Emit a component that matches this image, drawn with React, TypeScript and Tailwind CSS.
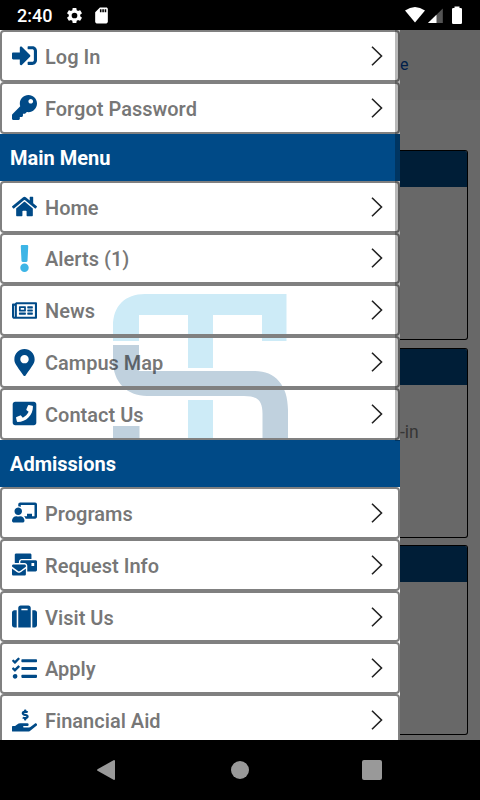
import type { IconType } from 'react-icons'
import {
  FaChalkboardTeacher,
  FaExclamation,
  FaHandHoldingUsd,
  FaHome,
  FaKey,
  FaMailBulk,
  FaMapMarkerAlt,
  FaPhoneSquare,
  FaRegNewspaper,
  FaSignInAlt,
  FaSuitcase,
  FaTasks,
} from 'react-icons/fa'

type Item = { label: string; icon: IconType; color?: string }
type Section = { title?: string; items: Item[] }

const sections: Section[] = [
  {
    items: [
      { label: 'Log In', icon: FaSignInAlt },
      { label: 'Forgot Password', icon: FaKey },
    ],
  },
  {
    title: 'Main Menu',
    items: [
      { label: 'Home', icon: FaHome },
      { label: 'Alerts (1)', icon: FaExclamation, color: 'text-[#3db5e6]' },
      { label: 'News', icon: FaRegNewspaper },
      { label: 'Campus Map', icon: FaMapMarkerAlt },
      { label: 'Contact Us', icon: FaPhoneSquare },
    ],
  },
  {
    title: 'Admissions',
    items: [
      { label: 'Programs', icon: FaChalkboardTeacher },
      { label: 'Request Info', icon: FaMailBulk },
      { label: 'Visit Us', icon: FaSuitcase },
      { label: 'Apply', icon: FaTasks },
      { label: 'Financial Aid', icon: FaHandHoldingUsd },
    ],
  },
]

function StatusBar() {
  return (
    <header className="flex h-[30px] shrink-0 items-center justify-between bg-black pr-[17px] pl-[17px] text-white">
      <div className="flex items-center">
        <span className="w-[48px] pt-px text-[18px] leading-none font-medium">2:40</span>
        <svg className="size-[19px]" viewBox="0 0 24 24" fill="currentColor">
          <path d="M19.14 12.94c.04-.3.06-.61.06-.94 0-.32-.02-.64-.07-.94l2.03-1.58a.49.49 0 0 0 .12-.61l-1.92-3.32a.49.49 0 0 0-.59-.22l-2.39.96c-.5-.38-1.03-.7-1.62-.94l-.36-2.54A.48.48 0 0 0 13.92 2.4h-3.84c-.24 0-.43.17-.47.41l-.36 2.54c-.59.24-1.13.57-1.62.94l-2.39-.96a.48.48 0 0 0-.59.22L2.74 8.87c-.12.21-.08.47.12.61l2.03 1.58c-.05.3-.09.63-.09.94s.02.64.07.94l-2.03 1.58a.49.49 0 0 0-.12.61l1.92 3.32c.12.22.37.29.59.22l2.39-.96c.5.38 1.03.7 1.62.94l.36 2.54c.05.24.24.41.48.41h3.84c.24 0 .44-.17.47-.41l.36-2.54c.59-.24 1.13-.56 1.62-.94l2.39.96c.22.08.47 0 .59-.22l1.92-3.32a.49.49 0 0 0-.12-.61zM12 15.6A3.6 3.6 0 1 1 12 8.4a3.6 3.6 0 0 1 0 7.2z" />
        </svg>
        <svg className="ml-[8px] size-[19px]" viewBox="0 0 24 24" fill="currentColor">
          <path d="M18 2h-8L4.02 8 4 20c0 1.1.9 2 2 2h12c1.1 0 2-.9 2-2V4c0-1.1-.9-2-2-2zm-6 6h-2V4h2v4zm3 0h-2V4h2v4zm3 0h-2V4h2v4z" />
        </svg>
      </div>
      <svg width="58" height="18" viewBox="0 0 58 18" fill="currentColor">
        <path d="M0 4.600Q10 -2.600 20 4.600L10 16.500Z" />
        <path d="M37.800 2.500V17H23Z" opacity=".33" />
        <path d="M31.500 8.700V17H23Z" />
        <path d="M49.500 0.500h5v1.500h1.300q1.200 0 1.200 1.200v13.500q0 1.200-1.200 1.200h-7.600q-1.200 0-1.200-1.200v-13.500q0-1.200 1.200-1.200h1.300z" />
      </svg>
    </header>
  )
}

function Watermark() {
  return (
    <svg className="absolute top-[264px] left-[113px]" width="176" height="146" viewBox="0 0 176 146">
      <path
        fill="#cdebf7"
        d="M0 47V32C0 12 12 0 32 0H173.500V47H149V21H100V74H75V21H26V47ZM75 106H100V146H75Z"
      />
      <path
        fill="#c0d1de"
        d="M0 51H26V77H142C162 77 175 91 175 116V146H149.500V120C149.500 107 145 102 131 102H34C14 102 0 88 0 67ZM0 132H26.500V146H0Z"
      />
    </svg>
  )
}

function MenuRow({ label, icon: Icon, color = 'text-[#004a87]' }: Item) {
  return (
    <li className="flex h-[51.85px] shrink-0 items-center rounded-[4px] border-2 border-[#808080] pr-[14px] pl-[10px]">
      <Icon className={`h-[27px] w-[25px] shrink-0 ${color}`} />
      <span className="ml-[8px] flex-1 pt-[2px] text-[20px] leading-6 font-semibold text-black/54">{label}</span>
      <svg className="mr-px" width="12" height="20" viewBox="0 0 12 20" fill="none" stroke="#222" strokeWidth="1.6">
        <path d="M1 .7 10.500 10 1 19.300" />
      </svg>
    </li>
  )
}

function Drawer() {
  return (
    <nav className="relative h-full w-[400px] shrink-0 overflow-hidden bg-white">
      <Watermark />
      <div className="relative flex flex-col">
        {sections.map((section, i) => (
          <section key={i}>
            {section.title && (
              <h2 className="flex h-[47px] items-center bg-[#004a87] pt-[2px] pl-[10px] text-[20px] font-bold text-white">
                {section.title}
              </h2>
            )}
            <ul>
              {section.items.map(item => (
                <MenuRow key={item.label} {...item} />
              ))}
            </ul>
          </section>
        ))}
      </div>
      {/* toolbar edge shadow, stops at the Admissions header */}
      <div className="absolute top-0 right-0 h-[411px] w-[5px] bg-black/28" />
    </nav>
  )
}

function DimmedCard({ text }: { text?: string }) {
  return (
    <div className="h-[190px] w-[67.500px] shrink-0 overflow-hidden rounded-r-[3px] border-y-[1.500px] border-r-[1.500px] border-black text-[17.500px] text-[#363636]">
      <div className="h-9 bg-[#001e37]" />
      {text && <p className="pt-[35px] leading-6">{text}</p>}
    </div>
  )
}

function DimmedPage() {
  return (
    <main className="flex h-full flex-1 flex-col overflow-hidden bg-[#686868]">
      <div className="h-[70px] shrink-0 bg-[#646464] pt-[23px] text-[16px] leading-6 text-[#001e4a]">e</div>
      <div className="flex flex-col gap-[7.500px] pt-[50px]">
        <DimmedCard />
        <DimmedCard text="-in" />
        <DimmedCard />
      </div>
    </main>
  )
}

function NavBar() {
  return (
    <footer className="flex h-[60px] shrink-0 items-center bg-black pl-[97px]">
      <svg width="18" height="20" viewBox="0 0 18 20" fill="#999">
        <path d="M17 0q1 0 1 1v18q0 1-1 1L.5 10.800q-.8-.8 0-1.600z" />
      </svg>
      <div className="ml-[116px] size-[18px] rounded-full bg-[#999]" />
      <div className="ml-[113px] size-[20px] rounded-[2px] bg-[#999]" />
    </footer>
  )
}

export default function App() {
  return (
    <div className="flex h-[800px] w-[480px] flex-col overflow-hidden bg-black font-[Roboto,sans-serif]">
      <StatusBar />
      <div className="flex h-[710px] shrink-0">
        <Drawer />
        <DimmedPage />
      </div>
      <NavBar />
    </div>
  )
}
